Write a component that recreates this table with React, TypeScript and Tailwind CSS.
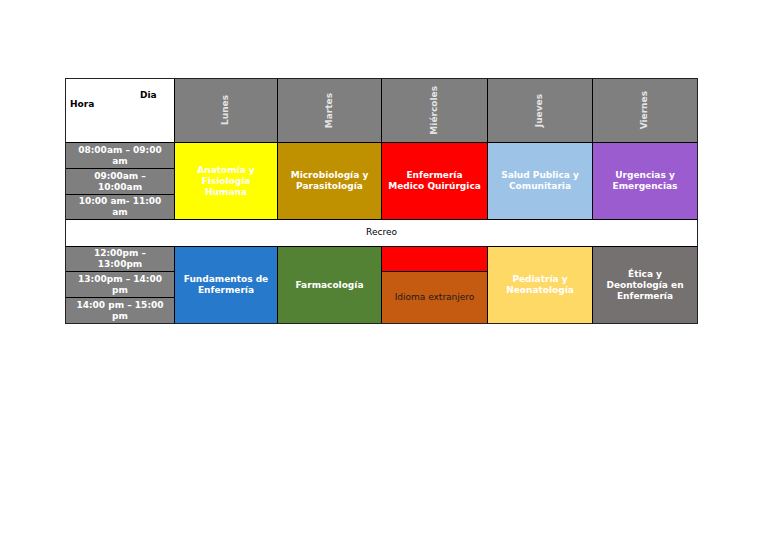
const days = ["Lunes", "Martes", "Miércoles", "Jueves", "Viernes"];

const morningTimes = ["08:00am – 09:00\nam", "09:00am –\n10:00am", "10:00 am- 11:00\nam"];
const afternoonTimes = ["12:00pm –\n13:00pm", "13:00pm – 14:00\npm", "14:00 pm – 15:00\npm"];

function TimeCell({ label, row }: { label: string; row: string }) {
  return (
    <div className={`col-start-1 ${row} flex items-center justify-center whitespace-pre-line bg-[#7f7f7f] px-1 text-center text-[9px] leading-[11px] font-bold text-white`}>
      {label}
    </div>
  );
}

function Subject({ children, className }: { children: React.ReactNode; className: string }) {
  return (
    <div className={`flex items-center justify-center whitespace-pre-line px-1 text-center text-[9px] leading-[11px] font-bold text-white ${className}`}>
      {children}
    </div>
  );
}

export default function App() {
  return (
    <div className="min-h-[543px] bg-white pl-[65px] pt-[78px] font-['DejaVu_Sans',sans-serif]">
      <div className="grid w-fit grid-cols-[108px_102px_103px_105px_104px_104px] grid-rows-[63px_25px_25px_24px_26px_24px_25px_25px] gap-px border border-[#222] bg-black">
        {/* header */}
        <div className="relative col-start-1 row-start-1 bg-white text-[9px] font-bold text-black">
          <span className="absolute left-[74px] top-[10px]">Dia</span>
          <span className="absolute left-[4px] top-[19px]">Hora</span>
        </div>
        {days.map((d) => (
          <div key={d} className="row-start-1 flex items-center justify-center bg-[#7f7f7f]">
            <span className="rotate-180 text-[9px] font-bold text-[#e4e4e4] [writing-mode:vertical-rl]">{d}</span>
          </div>
        ))}

        {/* morning */}
        {morningTimes.map((t, i) => (
          <TimeCell key={t} label={t} row={["row-start-2", "row-start-3", "row-start-4"][i]} />
        ))}
        <Subject className="col-start-2 row-start-2 row-span-3 bg-[#ffff00]">{"Anatomía y\nFisiología\nHumana"}</Subject>
        <Subject className="col-start-3 row-start-2 row-span-3 bg-[#bf9000]">{"Microbiología y\nParasitología"}</Subject>
        <Subject className="col-start-4 row-start-2 row-span-3 bg-[#ff0000]">{"Enfermería\nMedico Quirúrgica"}</Subject>
        <Subject className="col-start-5 row-start-2 row-span-3 bg-[#9dc3e6]">{"Salud Publica y\nComunitaria"}</Subject>
        <Subject className="col-start-6 row-start-2 row-span-3 bg-[#9a5ccf]">{"Urgencias y\nEmergencias"}</Subject>

        {/* break */}
        <div className="col-span-6 col-start-1 row-start-5 flex items-center justify-center bg-white text-[9px] text-black">
          Recreo
        </div>

        {/* afternoon */}
        {afternoonTimes.map((t, i) => (
          <TimeCell key={t} label={t} row={["row-start-6", "row-start-7", "row-start-8"][i]} />
        ))}
        <Subject className="col-start-2 row-start-6 row-span-3 bg-[#2779cb]">{"Fundamentos de\nEnfermería"}</Subject>
        <Subject className="col-start-3 row-start-6 row-span-3 bg-[#548235]">Farmacología</Subject>
        <div className="col-start-4 row-start-6 bg-[#ff0000]" />
        <div className="col-start-4 row-start-7 row-span-2 flex items-center justify-center bg-[#c55a11] text-[9px] text-[#1a1a1a]">
          Idioma extranjero
        </div>
        <Subject className="col-start-5 row-start-6 row-span-3 bg-[#ffd966]">{"Pediatría y\nNeonatología"}</Subject>
        <Subject className="col-start-6 row-start-6 row-span-3 bg-[#767171]">{"Ética y\nDeontología en\nEnfermería"}</Subject>
      </div>
    </div>
  );
}
